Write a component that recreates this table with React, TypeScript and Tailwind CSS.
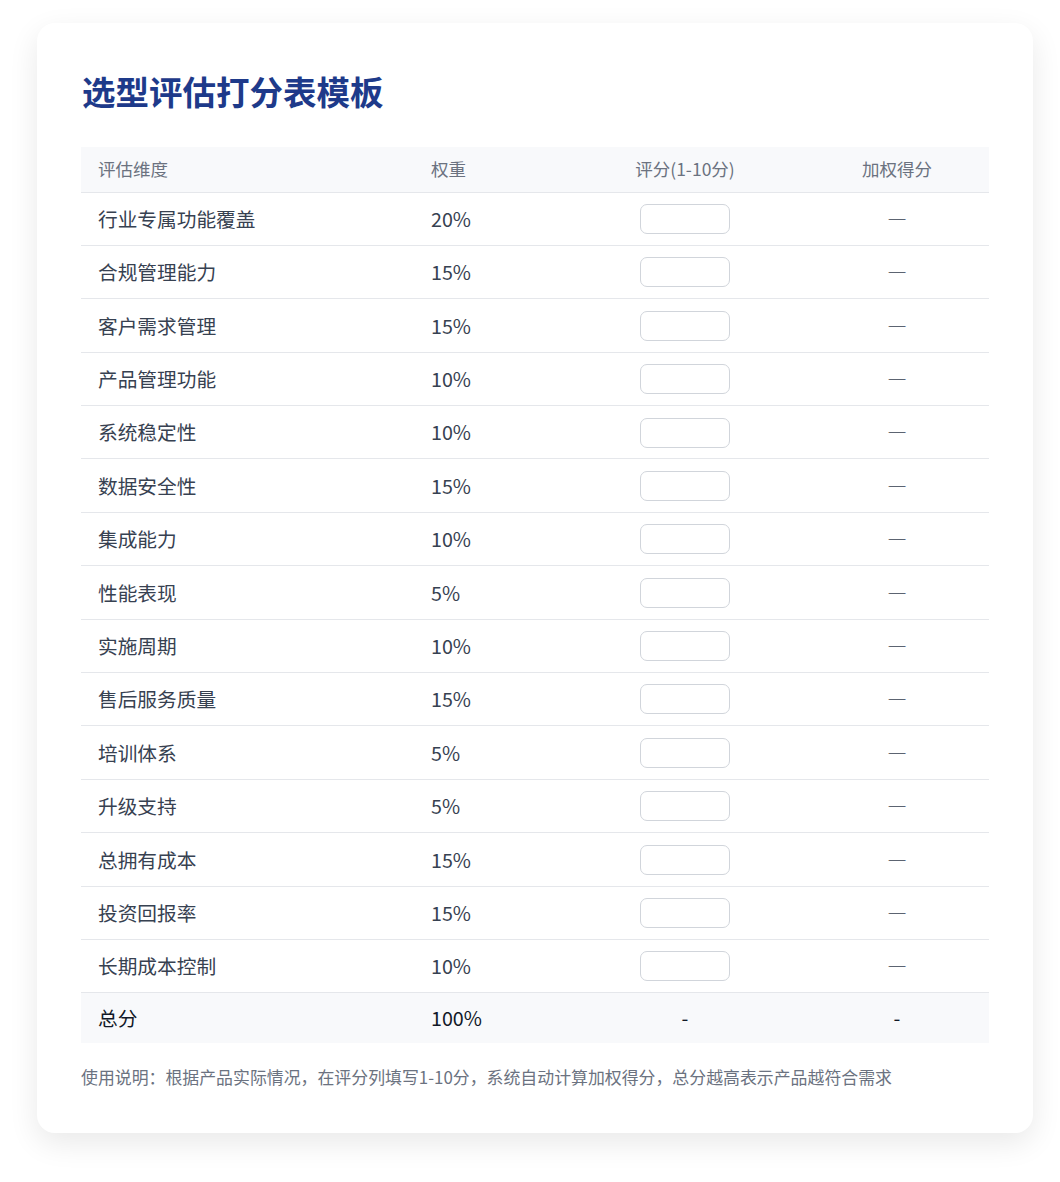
const rows = [
  { name: "行业专属功能覆盖", weight: "20%" },
  { name: "合规管理能力", weight: "15%" },
  { name: "客户需求管理", weight: "15%" },
  { name: "产品管理功能", weight: "10%" },
  { name: "系统稳定性", weight: "10%" },
  { name: "数据安全性", weight: "15%" },
  { name: "集成能力", weight: "10%" },
  { name: "性能表现", weight: "5%" },
  { name: "实施周期", weight: "10%" },
  { name: "售后服务质量", weight: "15%" },
  { name: "培训体系", weight: "5%" },
  { name: "升级支持", weight: "5%" },
  { name: "总拥有成本", weight: "15%" },
  { name: "投资回报率", weight: "15%" },
  { name: "长期成本控制", weight: "10%" },
];

const App = () => {
  return (
    <div className="min-h-[1182px] bg-white pt-[23px] pb-[49px] font-['Noto_Sans_CJK_SC','Noto_Sans',sans-serif]">
      <div className="ml-[37px] w-[996px] rounded-[18px] bg-white p-[44px] pt-[44px] shadow-[0_10px_30px_rgba(0,0,0,0.09)]">
        <h1 className="mb-[33px] pl-[1px] text-[33.5px] font-bold leading-[47px] text-[#1e3a8a]">
          选型评估打分表模板
        </h1>
        <table className="w-[908px] table-fixed border-collapse">
          <colgroup>
            <col className="w-[333px]" />
            <col className="w-[151px]" />
            <col className="w-[240px]" />
            <col className="w-[184px]" />
          </colgroup>
          <thead>
            <tr className="h-[45px] border-b border-[#e5e7eb] bg-[#f8f9fb] text-[17.5px] text-[#6b7280]">
              <th className="px-[17px] text-left font-normal">评估维度</th>
              <th className="px-[17px] text-left font-normal">权重</th>
              <th className="px-[17px] text-center font-normal">评分(1-10分)</th>
              <th className="px-[17px] text-center font-normal">加权得分</th>
            </tr>
          </thead>
          <tbody>
            {rows.map((row) => (
              <tr key={row.name} className="h-[53.4px] border-b border-[#e5e7eb] text-[19.7px] text-[#374151]">
                <td className="px-[17px] py-0 align-middle">{row.name}</td>
                <td className="px-[17px] py-0 align-middle">{row.weight}</td>
                <td className="px-[17px] py-0 text-center align-middle">
                  <input
                    type="number"
                    className="h-[30px] w-[90px] rounded-[7px] border border-[#d1d5db] bg-white text-center text-[17px] outline-none"
                  />
                </td>
                <td className="px-[17px] py-0 text-center align-middle [font-feature-settings:'fwid']">—</td>
              </tr>
            ))}
            <tr className="h-[50px] bg-[#f8f9fb] text-[19.7px] text-[#111827]">
              <td className="px-[17px] py-0 align-middle">总分</td>
              <td className="px-[17px] py-0 align-middle">100%</td>
              <td className="px-[17px] py-0 text-center align-middle">-</td>
              <td className="px-[17px] py-0 text-center align-middle">-</td>
            </tr>
          </tbody>
        </table>
        <p className="mt-[21px] text-[16.9px] leading-[25px] text-[#6b7280]">
          使用说明：根据产品实际情况，在评分列填写1-10分，系统自动计算加权得分，总分越高表示产品越符合需求
        </p>
      </div>
    </div>
  );
};

export default App;
